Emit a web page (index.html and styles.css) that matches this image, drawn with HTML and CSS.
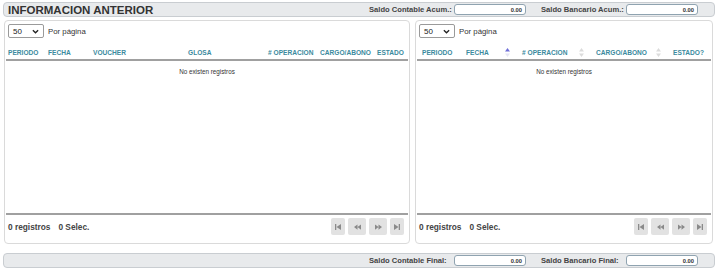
FILE: index.html
```html
<!DOCTYPE html>
<html lang="es">
<head>
<meta charset="utf-8">
<title>Informacion anterior</title>
<link rel="stylesheet" href="styles.css">
</head>
<body>
<div class="page">
  <div class="bar">
    <div class="bar-title">INFORMACION ANTERIOR</div>
    <div class="saldos">
      <span class="lbl lbl-c">Saldo Contable Acum.:</span>
      <span class="amount">0.00</span>
      <span class="lbl lbl-b">Saldo Bancario Acum.:</span>
      <span class="amount">0.00</span>
    </div>
  </div>

  <div class="panels">
    <section class="panel panel-left">
      <div class="pager-top">
        <div class="select"><span>50</span><svg class="chev" viewBox="0 0 8 5" width="7" height="5"><path d="M1 1 L4 4 L7 1" fill="none" stroke="#222" stroke-width="1.5"/></svg></div>
        <span class="per">Por página</span>
      </div>
      <div class="thead thead-left">
        <div class="th">PERIODO</div>
        <div class="th">FECHA</div>
        <div class="th">VOUCHER</div>
        <div class="th">GLOSA</div>
        <div class="th"># OPERACION</div>
        <div class="th">CARGO/ABONO</div>
        <div class="th">ESTADO</div>
      </div>
      <div class="tbody"><div class="empty">No existen registros</div></div>
      <div class="tfoot">
        <div class="count"><span>0 registros</span><span>0 Selec.</span></div>
        <div class="nav">
          <span class="btn btn-end"><svg viewBox="0 0 6 6" width="6" height="6"><rect x="0" y="0" width="1.3" height="6" fill="#8a8a8a"/><path d="M6 0 L1.5 3 L6 6Z" fill="#8a8a8a"/></svg></span>
          <span class="btn"><svg viewBox="0 0 8 6" width="7" height="6"><path d="M4 0 L0 3 L4 6Z M8 0 L4 3 L8 6Z" fill="#8a8a8a"/></svg></span>
          <span class="btn"><svg viewBox="0 0 8 6" width="7" height="6"><path d="M0 0 L4 3 L0 6Z M4 0 L8 3 L4 6Z" fill="#8a8a8a"/></svg></span>
          <span class="btn btn-end"><svg viewBox="0 0 6 6" width="6" height="6"><path d="M0 0 L4.5 3 L0 6Z" fill="#8a8a8a"/><rect x="4.7" y="0" width="1.3" height="6" fill="#8a8a8a"/></svg></span>
        </div>
      </div>
    </section>

    <section class="panel panel-right">
      <div class="pager-top">
        <div class="select"><span>50</span><svg class="chev" viewBox="0 0 8 5" width="7" height="5"><path d="M1 1 L4 4 L7 1" fill="none" stroke="#222" stroke-width="1.5"/></svg></div>
        <span class="per">Por página</span>
      </div>
      <div class="thead thead-right">
        <div class="th">PERIODO</div>
        <div class="th">FECHA<svg class="sort" viewBox="0 0 5 9" width="5" height="9"><path d="M2.5 0 L5 3.5 L0 3.5Z" fill="#6f6fd8"/><path d="M0 5.5 L5 5.5 L2.5 9Z" fill="#e6e6f4"/></svg></div>
        <div class="th"># OPERACION<svg class="sort" viewBox="0 0 5 9" width="5" height="9"><path d="M2.5 0 L5 3.5 L0 3.5Z" fill="#dcdcdc"/><path d="M0 5.5 L5 5.5 L2.5 9Z" fill="#dcdcdc"/></svg></div>
        <div class="th">CARGO/ABONO<svg class="sort" viewBox="0 0 5 9" width="5" height="9"><path d="M2.5 0 L5 3.5 L0 3.5Z" fill="#dcdcdc"/><path d="M0 5.5 L5 5.5 L2.5 9Z" fill="#dcdcdc"/></svg></div>
        <div class="th">ESTADO?</div>
      </div>
      <div class="tbody"><div class="empty">No existen registros</div></div>
      <div class="tfoot">
        <div class="count"><span>0 registros</span><span>0 Selec.</span></div>
        <div class="nav">
          <span class="btn btn-end"><svg viewBox="0 0 6 6" width="6" height="6"><rect x="0" y="0" width="1.3" height="6" fill="#8a8a8a"/><path d="M6 0 L1.5 3 L6 6Z" fill="#8a8a8a"/></svg></span>
          <span class="btn"><svg viewBox="0 0 8 6" width="7" height="6"><path d="M4 0 L0 3 L4 6Z M8 0 L4 3 L8 6Z" fill="#8a8a8a"/></svg></span>
          <span class="btn"><svg viewBox="0 0 8 6" width="7" height="6"><path d="M0 0 L4 3 L0 6Z M4 0 L8 3 L4 6Z" fill="#8a8a8a"/></svg></span>
          <span class="btn btn-end"><svg viewBox="0 0 6 6" width="6" height="6"><path d="M0 0 L4.5 3 L0 6Z" fill="#8a8a8a"/><rect x="4.7" y="0" width="1.3" height="6" fill="#8a8a8a"/></svg></span>
        </div>
      </div>
    </section>
  </div>

  <div class="bar bar-bottom">
    <div class="saldos">
      <span class="lbl lbl-c">Saldo Contable Final:</span>
      <span class="amount">0.00</span>
      <span class="lbl lbl-b">Saldo Bancario Final:</span>
      <span class="amount">0.00</span>
    </div>
  </div>
</div>
</body>
</html>
```

FILE: styles.css
```css
* { box-sizing: border-box; }
html, body { margin: 0; padding: 0; background: #fff; }
body {
  font-family: "Liberation Sans", Arial, sans-serif;
  color: #333;
  width: 718px;
  height: 272px;
  overflow: hidden;
}
.page {
  padding: 2px 3px 0 3px;
}
.bar {
  height: 15px;
  display: flex;
  align-items: center;
  justify-content: space-between;
  background: #e8eaec;
  border: 1px solid #c9cdd1;
  border-radius: 4px;
  padding: 0 16px 0 4px;
}
.bar-title {
  font-size: 11.5px;
  font-weight: bold;
  color: #333;
}
.bar-bottom {
  margin-top: 9px;
  justify-content: flex-end;
}
.saldos {
  display: flex;
  align-items: center;
}
.lbl {
  font-size: 7.6px;
  font-weight: bold;
  color: #444;
  white-space: nowrap;
}
.lbl-c { width: 85px; }
.lbl-b { width: 85px; margin-left: 15px; }
.amount {
  width: 72px;
  height: 11px;
  background: #fff;
  border: 1px solid #8fa3b0;
  border-radius: 3px;
  font-size: 5.8px;
  font-weight: bold;
  color: #333;
  text-align: right;
  padding-right: 3px;
  line-height: 10px;
}
.panels {
  display: flex;
  gap: 5px;
  margin: 3px 0 0 1px;
  height: 224px;
}
.panel {
  border: 1px solid #dadada;
  border-radius: 4px;
  display: flex;
  flex-direction: column;
  padding: 0 1px;
}
.panel-left { width: 406px; }
.panel-right { width: 298px; }
.pager-top {
  display: flex;
  align-items: center;
  height: 16px;
  margin-top: 2px;
  padding-left: 2px;
}
.select {
  width: 36px;
  height: 14px;
  border: 1px solid #9a9a9a;
  border-radius: 2px;
  display: flex;
  align-items: center;
  justify-content: space-between;
  padding: 0 4px 0 4px;
  font-size: 8px;
  color: #222;
}
.per {
  margin-left: 4px;
  font-size: 7.8px;
  color: #333;
}
.thead {
  display: grid;
  height: 22px;
  align-items: center;
  border-bottom: 2px solid #a0a0a0;
  padding-top: 6px;
}
.thead-left {
  grid-template-columns: 40px 45px 95px 80px 52px 57px 1fr;
}
.thead-right {
  grid-template-columns: 44px 56px 74px 77px 1fr;
  padding-left: 1px;
}
.th {
  font-size: 6.6px;
  font-weight: bold;
  color: #3b8a9e;
  padding-left: 2px;
  display: flex;
  align-items: center;
  white-space: nowrap;
}
.thead-right .th { padding-left: 4px; }
.sort {
  margin-left: auto;
  margin-right: 8px;
}
.tbody {
  flex: 1;
}
.empty {
  text-align: center;
  font-size: 6.3px;
  color: #333;
  padding-top: 7px;
}
.tfoot {
  border-top: 2px solid #a0a0a0;
  height: 30px;
  display: flex;
  align-items: flex-start;
  justify-content: space-between;
  padding: 3px 4px 0 2px;
}
.count {
  display: flex;
  gap: 8px;
  font-size: 8.3px;
  font-weight: bold;
  color: #444;
  height: 17px;
  align-items: center;
}
.nav {
  display: flex;
  gap: 3px;
}
.btn {
  width: 18px;
  height: 17px;
  background: #e2e2e2;
  border-radius: 2px;
  display: flex;
  align-items: center;
  justify-content: center;
}
.btn-end { width: 14px; }
```
